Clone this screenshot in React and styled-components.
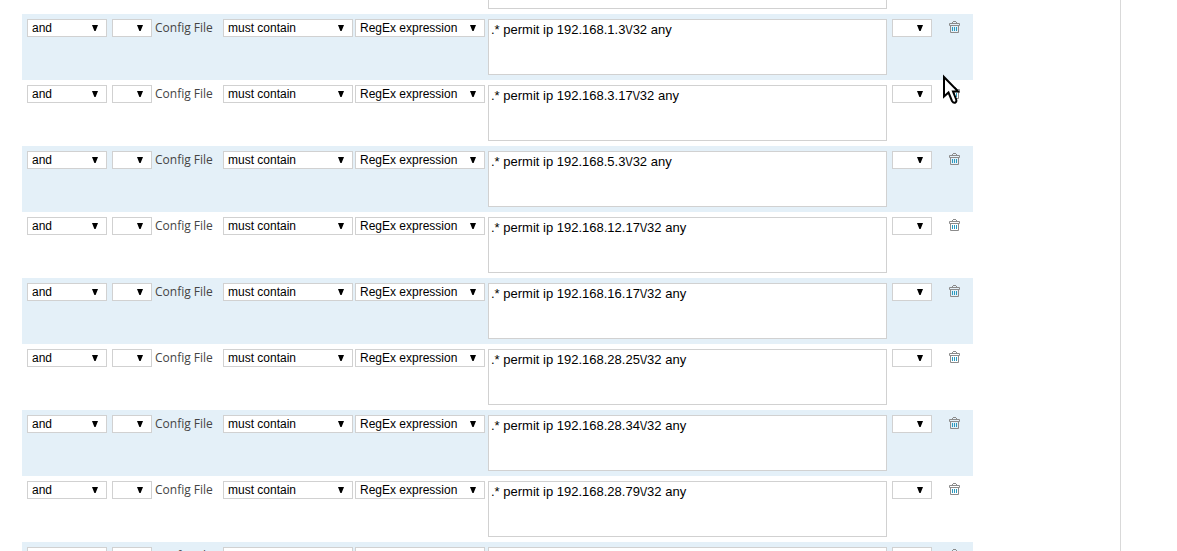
import React from 'react'
import styled, { createGlobalStyle } from 'styled-components';

const GlobalStyle = createGlobalStyle`
    * {
        box-sizing: border-box;
    }

    body {
        margin: 0;
        background-color: #fff;
        font-family: "Open Sans", sans-serif;
    }
`;

const Page = styled.div`
    position: relative;
    display: flex;
    height: 100vh;
    padding-right: 56px;
    overflow: hidden;
`;

const Panel = styled.main`
    flex: 1;
    padding: 0 147px 0 22px;
    border-right: 1px solid #d9d9d9;
`;

/* the list is scrolled down, its first row is mostly above the edge */
const RuleList = styled.div`
    margin-top: -52px;
`;

const RuleRow = styled.div`
    display: grid;
    grid-template-columns: 85px 43px 68px 132px 133px 1fr 57px 24px;
    align-items: start;
    padding: 5px 0 5px 5px;
    background-color: ${props => props.$shaded ? '#e4f0f8' : '#fff'};
`;

const SelectBox = styled.div`
    position: relative;
    width: ${props => props.$width};
    height: 18px;
`;

const SelectInput = styled.select`
    display: block;
    width: 100%;
    height: 18px;
    margin: 0;
    padding: 0 4px;
    border: 1px solid #d1d1d1;
    border-radius: 0;
    appearance: none;
    background-color: #fff;
    color: #000;
    font-family: "Liberation Sans", Arial, sans-serif;
    font-size: 12px;
    line-height: 16px;
`;

const Arrow = styled.svg`
    position: absolute;
    top: 6px;
    right: 9px;
    pointer-events: none;
`;

const FieldName = styled.label`
    color: #444;
    font-size: 12px;
    line-height: 18px;
    white-space: nowrap;
`;

const Pattern = styled.textarea`
    display: block;
    height: 56px;
    margin: 0 5px 0 0;
    padding: 2px;
    border: 1px solid #d1d1d1;
    border-radius: 0;
    resize: none;
    background-color: #fff;
    color: #000;
    font-family: "Liberation Sans", Arial, sans-serif;
    font-size: 13px;
    line-height: 16px;
`;

const DeleteButton = styled.button`
    display: block;
    width: 11px;
    height: 14px;
    margin: 0;
    padding: 2px 0 0;
    border: 0;
    background: none;
    cursor: pointer;

    svg {
        display: block;
    }
`;

const Pointer = styled.svg`
    position: absolute;
    top: 74px;
    left: 942px;
    pointer-events: none;
`;

function Select({ name, width, value })
{ return <SelectBox $width={width}>
        <SelectInput aria-label={name} defaultValue={value}>
            <option value={value}>{value}</option>
        </SelectInput>
        <Arrow width="6" height="6" viewBox="0 0 6 6" aria-hidden="true">
            <path d="M0 0H6L3.6 6H2.4Z" fill="#000"/>
        </Arrow>
    </SelectBox>
}

function TrashIcon()
{ return <svg width="11" height="12" viewBox="0 0 11 12" fill="none" aria-hidden="true">
        <path d="M3 1.5H4M7 1.5H8M4 0.5H7" stroke="#8b8b8b"/>
        <path d="M0.5 2.5H10.5V4.5H0.5Z" stroke="#8b8b8b"/>
        <path d="M1.5 4.5V11.5H9.5V4.5" stroke="#8b8b8b"/>
        <path d="M3.5 6V10M5.5 6V10M7.5 6V10" stroke="#2a9abf"/>
    </svg>
}

function Rule({ id, address, shaded })
{ return <RuleRow $shaded={shaded}>
        <Select name="Operator" width="80px" value="and"/>
        <Select name="Open bracket" width="40px" value=""/>
        <FieldName htmlFor={id}>Config File</FieldName>
        <Select name="Condition" width="130px" value="must contain"/>
        <Select name="Expression type" width="130px" value="RegEx expression"/>
        <Pattern id={id} spellCheck={false} defaultValue={`.* permit ip ${address}\\/32 any`}/>
        <Select name="Close bracket" width="40px" value=""/>
        <DeleteButton type="button" aria-label="Delete rule">
            <TrashIcon/>
        </DeleteButton>
    </RuleRow>
}

const addresses = [
    '192.168.1.2',
    '192.168.1.3',
    '192.168.3.17',
    '192.168.5.3',
    '192.168.12.17',
    '192.168.16.17',
    '192.168.28.25',
    '192.168.28.34',
    '192.168.28.79',
    '192.168.28.80',
];

export default function App()
{ return <>
        <GlobalStyle/>
        <Page>
            <Panel>
                <RuleList>
                    {addresses.map((address, i) =>
                        <Rule key={address} id={`pattern-${i}`} address={address} shaded={i % 2 === 1}/>
                    )}
                </RuleList>
            </Panel>
            <Pointer width="18" height="32" viewBox="0 0 18 32" aria-hidden="true">
                <path d="M2 3V22.5L6.5 18.5L10 27Q11.5 29.5 13.5 28.5Q15 27.5 14 25L11 17.5H16.2Z" fill="#fff" stroke="#000" strokeWidth="2"/>
            </Pointer>
        </Page>
    </>
}
